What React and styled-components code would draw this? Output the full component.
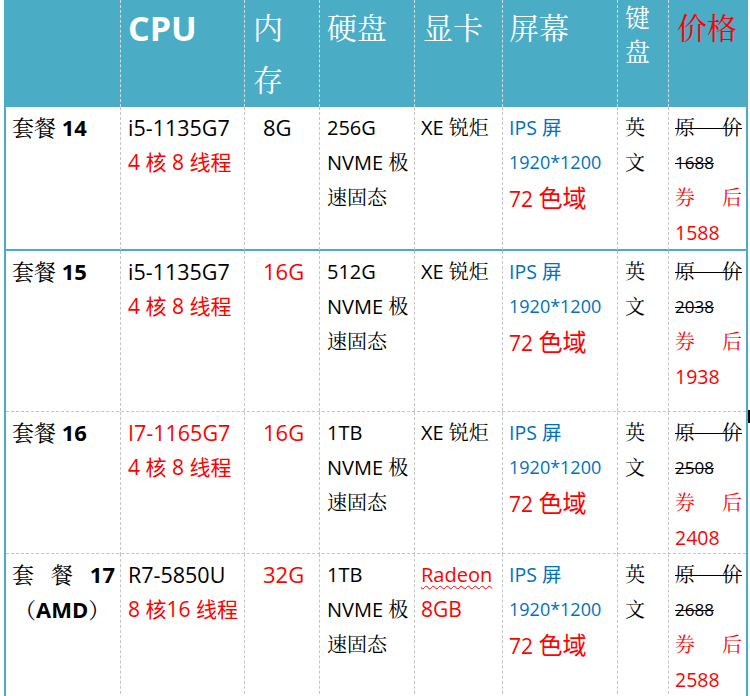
import React from "react";
import styled, { createGlobalStyle } from "styled-components";

const TEAL = "#4BACC6";
const RED = "#FF0000";
const BLUE = "#0070C0";
const SERIF = `"Open Sans", "Noto Serif CJK SC", "Noto Sans CJK SC", serif`;
const SANS = `"Open Sans", "Noto Sans CJK SC", sans-serif`;
const COLS = "114px 124px 75px 95px 88px 115px 51px 78px";

const Global = createGlobalStyle`
  html, body { margin: 0; padding: 0; background: #fff; }
  body { font-family: ${SERIF}; color: #000; }
`;

const Sheet = styled.div`
  box-sizing: border-box;
  margin-left: 4px;
  width: 744px;
  border-left: 2px solid ${TEAL};
  border-right: 2px solid ${TEAL};
`;

const Row = styled.div`
  position: relative;
  box-sizing: border-box;
  display: grid;
  grid-template-columns: ${COLS};
  height: ${(p) => p.$h}px;
  background: ${(p) => (p.$head ? TEAL : "#fff")};
  border-bottom: ${(p) => p.$sep || "none"};
`;

const Marker = styled.span`
  position: absolute;
  right: -4px;
  bottom: -12px;
  width: 2px;
  height: 13px;
  background: #000;
`;

const Cell = styled.div`
  box-sizing: border-box;
  min-width: 0;
  padding: ${(p) => p.$pt ?? 3}px ${(p) => p.$pr ?? 4}px 0 ${(p) => p.$pl ?? 7}px;
  border-left: ${(p) =>
    p.$first ? "none" : `1px dashed ${p.$head ? "#d6dde0" : "#c4c4c4"}`};
  font-size: 19px;
  line-height: 35px;
`;

const HeadText = styled.div`
  color: ${(p) => p.$color || "#fff"};
  font-family: ${(p) => (p.$latin ? SANS : SERIF)};
  font-weight: ${(p) => (p.$bold ? 700 : 400)};
  font-size: ${(p) => p.$size || 30}px;
  line-height: ${(p) => p.$lh || 52}px;
  width: ${(p) => (p.$w ? `${p.$w}px` : "auto")};
`;

const Line = styled.div`
  color: ${(p) => p.$color || "#000"};
  font-family: ${(p) => (p.$sans ? SANS : SERIF)};
  font-size: ${(p) => p.$size || 19}px;
  font-weight: ${(p) => (p.$bold ? 700 : 400)};
  white-space: nowrap;
  text-decoration: ${(p) => (p.$strike ? "line-through" : "none")};
  text-decoration-thickness: 1px;
  text-align: ${(p) => (p.$justify ? "justify" : "left")};
  text-align-last: ${(p) => (p.$justify ? "justify" : "auto")};
  padding-left: ${(p) => p.$indent || 0}px;
`;

const Num = styled.span`
  font-weight: 700;
  font-size: ${(p) => p.$size || 22}px;
`;

const Big = styled.span`
  font-size: ${(p) => p.$size}px;
`;

const Wavy = styled.span`
  text-decoration: underline wavy ${RED};
  text-decoration-thickness: 1px;
  text-underline-offset: 3px;
`;

const plans = [
  { n: "14", h: 144, sep: `2px solid ${TEAL}`, cpu: "i5-1135G7", cpuRed: false, cores: "4 核 8 线程", mem: "8G", memRed: false, disk: "256G", gpu: "xe", was: "1688", now: "1588" },
  { n: "15", h: 161, sep: "1px dashed #c4c4c4", mark: true, cpu: "i5-1135G7", cpuRed: false, cores: "4 核 8 线程", mem: "16G", memRed: true, disk: "512G", gpu: "xe", was: "2038", now: "1938" },
  { n: "16", h: 142, sep: "1px dashed #c4c4c4", cpu: "I7-1165G7", cpuRed: true, cores: "4 核 8 线程", mem: "16G", memRed: true, disk: "1TB", gpu: "xe", was: "2508", now: "2408" },
  { n: "17", amd: true, h: 150, cpu: "R7-5850U", cpuRed: false, cores: "8 核16 线程", mem: "32G", memRed: true, disk: "1TB", gpu: "radeon", was: "2688", now: "2588" },
];

function PlanRow({ p }) {
  return (
    <Row $h={p.h} $sep={p.sep}>
      <Cell $first $pl={6} $pr={5}>
        {p.amd ? (
          <>
            <Line $justify $size={22}>
              套 餐 <Num>{p.n}</Num>
            </Line>
            <Line $size={22} $indent={2}>
              （<Num>AMD</Num>）
            </Line>
          </>
        ) : (
          <Line $size={22}>
            套餐 <Num>{p.n}</Num>
          </Line>
        )}
      </Cell>
      <Cell>
        <Line $sans $size={21.5} $color={p.cpuRed ? RED : "#000"}>{p.cpu}</Line>
        <Line $sans $size={21} $color={RED}>{p.cores}</Line>
      </Cell>
      <Cell $pl={18}>
        <Line $sans $size={22} $color={p.memRed ? RED : "#000"}>{p.mem}</Line>
      </Cell>
      <Cell>
        <Line $size={20}>{p.disk}</Line>
        <Line $size={20}>NVME 极</Line>
        <Line $size={20}>速固态</Line>
      </Cell>
      <Cell $pl={6}>
        {p.gpu === "xe" ? (
          <Line $size={20}>XE 锐炬</Line>
        ) : (
          <>
            <Line $sans $size={20} $color={RED}>
              <Wavy>Radeon</Wavy>
            </Line>
            <Line $sans $size={21} $color={RED}>8GB</Line>
          </>
        )}
      </Cell>
      <Cell $pl={6}>
        <Line $sans $size={19.5} $color={BLUE}>IPS 屏</Line>
        <Line $sans $size={18} $color={BLUE}>1920*1200</Line>
        <Line $sans $size={21} $color={RED}>
          72 <Big $size={24}>色域</Big>
        </Line>
      </Cell>
      <Cell>
        <Line $size={20}>英</Line>
        <Line $size={20}>文</Line>
      </Cell>
      <Cell $pl={6} $pr={4}>
        <Line $justify $strike $size={20}>原 价</Line>
        <Line $strike $size={17}>{p.was}</Line>
        <Line $justify $size={20} $color={RED}>券 后</Line>
        <Line $sans $size={19.5} $color={RED}>{p.now}</Line>
      </Cell>
      {p.mark && <Marker />}
    </Row>
  );
}

export default function App() {
  return (
    <>
      <Global />
      <Sheet>
        <Row $head $h={107}>
          <Cell $first $head />
          <Cell $head $pt={2}>
            <HeadText $latin $bold $size={34}>CPU</HeadText>
          </Cell>
          <Cell $head $pt={2} $pl={8}>
            <HeadText $w={32}>内存</HeadText>
          </Cell>
          <Cell $head $pt={2}>
            <HeadText>硬盘</HeadText>
          </Cell>
          <Cell $head $pt={2} $pl={8}>
            <HeadText>显卡</HeadText>
          </Cell>
          <Cell $head $pt={2} $pl={6}>
            <HeadText>屏幕</HeadText>
          </Cell>
          <Cell $head $pt={0}>
            <HeadText $size={25} $lh={34} $w={27}>键盘</HeadText>
          </Cell>
          <Cell $head $pt={2} $pl={8}>
            <HeadText $color={RED}>价格</HeadText>
          </Cell>
        </Row>
        {plans.map((p) => (
          <PlanRow key={p.n} p={p} />
        ))}
      </Sheet>
    </>
  );
}
